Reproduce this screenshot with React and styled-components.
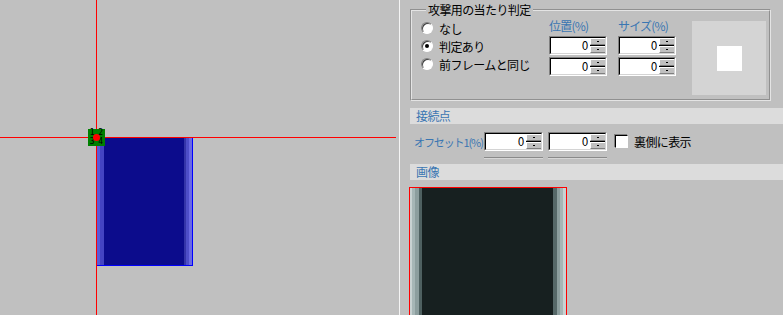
import styled, { createGlobalStyle } from 'styled-components'

const GlobalStyle = createGlobalStyle`
  html, body {
    margin: 0;
    padding: 0;
    background: #c0c0c0;
    overflow: hidden;
  }
  body {
    font-family: "Noto Sans CJK JP", "Noto Sans", sans-serif;
    font-size: 12px;
    color: #000;
  }
`

const blue = '#3a76b2'

const Screen = styled.div`
  display: flex;
  width: 783px;
  height: 315px;
  background: #c0c0c0;
  overflow: hidden;
`

/* ---------- canvas ---------- */
const Canvas = styled.div`
  position: relative;
  width: 399px;
  height: 315px;
  flex: none;
  border-right: 1px solid #f4f4f4;
  overflow: hidden;
`

const AxisV = styled.div`
  position: absolute;
  left: 96px;
  top: 0;
  bottom: 0;
  width: 1px;
  background: #ff0000;
`

const AxisH = styled.div`
  position: absolute;
  left: 0;
  width: 396px;
  top: 137px;
  height: 1px;
  background: #ff0000;
`

const Sprite = styled.div`
  position: absolute;
  left: 96px;
  top: 137px;
  width: 96px;
  height: 128px;
  border-right: 1px solid #0000ff;
  border-bottom: 1px solid #0000ff;
  background: linear-gradient(
    to right,
    #ff0000 0 1px,
    #5a5ad6 1px 4px,
    #4444c2 4px 8px,
    #0c0c8c 8px 88px,
    #3434a8 88px 90px,
    #4e4ec8 90px 93px,
    #6a6ae2 93px 96px
  );
`

const Pivot = styled.div`
  position: absolute;
  left: 88px;
  top: 129px;
  width: 17px;
  height: 17px;
  background: #008000;
  display: grid;
  grid-template-columns: 1fr 1fr;
  font-family: "DejaVu Sans Mono", monospace;
  font-size: 8px;
  line-height: 8px;
  text-align: center;
  color: #000;
`

const PivotDot = styled.div`
  position: absolute;
  left: 93px;
  top: 134px;
  width: 7px;
  height: 7px;
  border-radius: 50%;
  background: #ff0000;
`

/* ---------- right panel ---------- */
const Panel = styled.div`
  flex: 1;
  display: flex;
  flex-direction: column;
  padding-left: 10px;
  & > * {
    flex: none;
  }
`

const Group = styled.fieldset`
  margin: 2px 0 0 0;
  width: 360px;
  height: 99px;
  box-sizing: border-box;
  padding: 0 3px 4px 9px;
  border: 2px groove #e4e4e4;
  display: flex;
  align-items: flex-start;
`

const Legend = styled.legend`
  padding: 0 2px;
  margin-left: 5px;
  line-height: 16px;
  letter-spacing: -0.6px;
`

const RadioCol = styled.div`
  width: 128px;
  display: flex;
  flex-direction: column;
  padding-top: 1px;
`

const RadioRow = styled.label`
  display: flex;
  align-items: center;
  height: 18px;
  gap: 6px;
  letter-spacing: -0.6px;
`

const RadioDot = styled.span`
  width: 10px;
  height: 10px;
  border-radius: 50%;
  background: #fff;
  border: 1px solid;
  border-color: #808080 #ffffff #ffffff #808080;
  box-shadow: inset 1px 1px 0 #404040;
  display: flex;
  align-items: center;
  justify-content: center;
  &::after {
    content: '';
    width: 4px;
    height: 4px;
    border-radius: 50%;
    background: ${(p) => (p.$on ? '#000' : 'transparent')};
  }
`

const FieldCol = styled.div`
  display: flex;
  flex-direction: column;
  gap: 2px;
  margin-right: ${(p) => p.$gap}px;
`

const BlueLabel = styled.div`
  color: ${blue};
  line-height: 16px;
  height: 16px;
  letter-spacing: -0.8px;
  white-space: nowrap;
`

const Spin = styled.div`
  display: flex;
  width: ${(p) => p.$w}px;
  height: 19px;
  box-sizing: border-box;
  border: 1px solid;
  border-color: #808080 #ffffff #ffffff #808080;
`

const SpinInner = styled.div`
  flex: 1;
  display: flex;
  border: 1px solid;
  border-color: #000 #d4d4d4 #d4d4d4 #000;
  background: #fff;
`

const SpinText = styled.div`
  flex: 1;
  text-align: right;
  padding-right: 2px;
  line-height: 15px;
  font-family: "DejaVu Sans", sans-serif;
  font-size: 13px;
  transform: scaleX(0.8);
  transform-origin: right;
`

const SpinBtns = styled.div`
  width: 15px;
  display: flex;
  flex-direction: column;
  background: #000;
  gap: 1px;
`

const SpinBtn = styled.div`
  flex: 1;
  background: #c0c0c0;
  border-top: 1px solid #fff;
  border-left: 1px solid #fff;
  border-bottom: 1px solid #808080;
  display: flex;
  align-items: center;
  justify-content: center;
  &::after {
    content: '';
    width: 2px;
    height: 1px;
    background: #000;
  }
`

const Preview = styled.div`
  width: 74px;
  height: 74px;
  margin-top: 3px;
  background: #d4d4d4;
  display: flex;
  align-items: center;
  justify-content: center;
  &::after {
    content: '';
    width: 25px;
    height: 25px;
    background: #fff;
  }
`

const SectionHead = styled.div`
  margin-top: ${(p) => p.$mt}px;
  height: 16px;
  line-height: 16px;
  background: #dcdcdc;
  color: ${blue};
  padding-left: 6px;
  letter-spacing: -0.6px;
`

const OffsetRow = styled.div`
  display: flex;
  align-items: flex-start;
  height: 40px;
  padding-top: 8px;
  box-sizing: border-box;
`

const OffsetLabel = styled(BlueLabel)`
  width: 74px;
  flex: none;
  padding: 2px 0 0 4px;
  box-sizing: border-box;
  font-size: 11px;
  letter-spacing: -1.1px;
`

const SpinStack = styled.div`
  display: flex;
  flex-direction: column;
  margin-right: 5px;
  &::after {
    content: '';
    margin-top: 6px;
    height: 1px;
    background: #8a8a8a;
    box-shadow: 0 1px 0 #d6d6d6;
  }
`

const Check = styled.label`
  display: flex;
  align-items: center;
  gap: 6px;
  margin-left: 3px;
  height: 19px;
  letter-spacing: -0.6px;
`

const CheckBox = styled.span`
  width: 11px;
  height: 11px;
  background: #fff;
  border: 1px solid;
  border-color: #000 #fff #fff #000;
  box-shadow: -1px -1px 0 #808080;
`

const ImageFrame = styled.div`
  margin: 7px 0 0 -1px;
  width: 156px;
  height: 200px;
  border: 1px solid #ff0000;
  background: linear-gradient(
    to right,
    #c8d2d2 0 2px,
    #a6b6b6 2px 5px,
    #8c9e9e 5px 9px,
    #4e6060 9px 12px,
    #172020 12px 143px,
    #566868 143px 147px,
    #8c9e9e 147px 150px,
    #a6b6b6 150px 153px,
    #c8d2d2 153px 156px
  );
`

const SpinBox = ({ w }) => (
  <Spin $w={w}>
    <SpinInner>
      <SpinText>0</SpinText>
      <SpinBtns>
        <SpinBtn />
        <SpinBtn />
      </SpinBtns>
    </SpinInner>
  </Spin>
)

export default function App() {
  return (
    <Screen>
      <GlobalStyle />
      <Canvas>
        <Sprite />
        <AxisH />
        <AxisV />
        <Pivot>
          <span>1</span>
          <span>2</span>
          <span>3</span>
          <span>4</span>
        </Pivot>
        <PivotDot />
      </Canvas>

      <Panel>
        <Group>
          <Legend>攻撃用の当たり判定</Legend>
          <RadioCol>
            <RadioRow>
              <RadioDot />
              なし
            </RadioRow>
            <RadioRow>
              <RadioDot $on />
              判定あり
            </RadioRow>
            <RadioRow>
              <RadioDot />
              前フレームと同じ
            </RadioRow>
          </RadioCol>
          <FieldCol $gap={11}>
            <BlueLabel>位置(%)</BlueLabel>
            <SpinBox w={58} />
            <SpinBox w={58} />
          </FieldCol>
          <FieldCol $gap={16}>
            <BlueLabel>サイズ(%)</BlueLabel>
            <SpinBox w={58} />
            <SpinBox w={58} />
          </FieldCol>
          <Preview />
        </Group>

        <SectionHead $mt={7}>接続点</SectionHead>
        <OffsetRow>
          <OffsetLabel>オフセット1(%)</OffsetLabel>
          <SpinStack>
            <SpinBox w={59} />
          </SpinStack>
          <SpinStack>
            <SpinBox w={59} />
          </SpinStack>
          <Check>
            <CheckBox />
            裏側に表示
          </Check>
        </OffsetRow>

        <SectionHead $mt={0}>画像</SectionHead>
        <ImageFrame />
      </Panel>
    </Screen>
  )
}
